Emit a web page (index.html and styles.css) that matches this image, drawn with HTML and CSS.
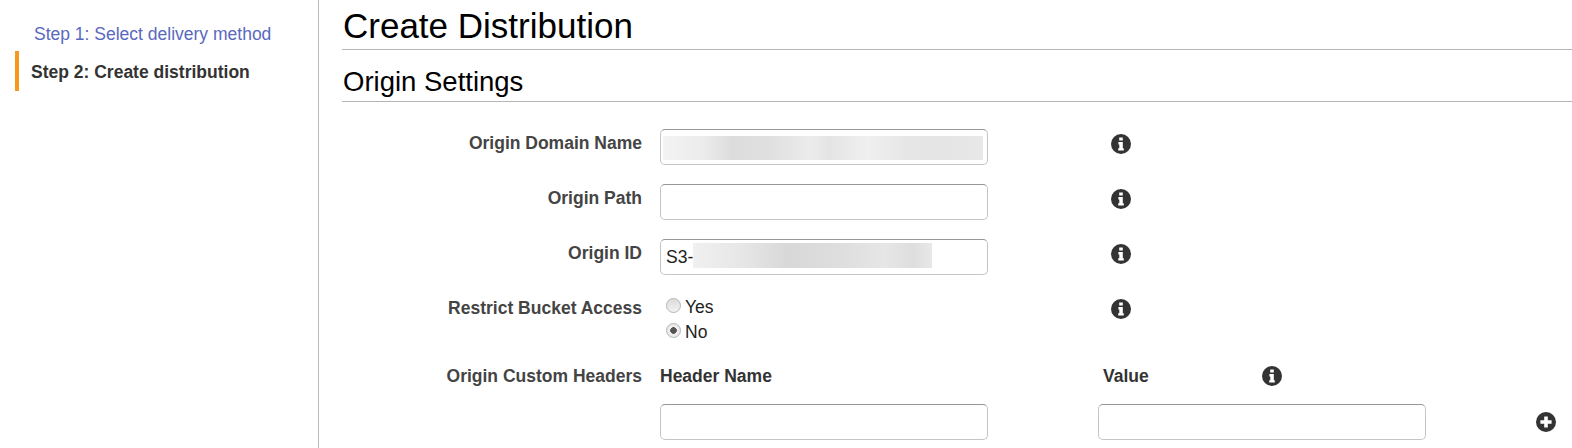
FILE: index.html
```html
<!DOCTYPE html>
<html lang="en">
<head>
  <meta charset="UTF-8">
  <meta name="viewport" content="width=device-width, initial-scale=1.0">
  <title>Create Distribution</title>
  <link rel="stylesheet" href="styles.css">
</head>
<body>
  <svg class="icon-defs" width="0" height="0">
    <symbol id="icon-info" viewBox="0 0 20 20">
      <path fill-rule="evenodd" d="M10 0a10 10 0 1 0 0 20a10 10 0 0 0 0-20zM8.2 3.4h3.6v3H8.2zM7.4 8h4.4v6.2h1v2.4H7.2v-2.4h1.1v-3.8h-.9z"/>
    </symbol>
    <symbol id="icon-plus" viewBox="0 0 20 20">
      <path fill-rule="evenodd" d="M10 0a10 10 0 1 0 0 20a10 10 0 0 0 0-20zM8.2 4.4h3.6v3.8h3.8v3.6h-3.8v3.8H8.2v-3.8H4.4V8.2h3.8z"/>
    </symbol>
  </svg>

  <div class="layout">
    <!-- Wizard steps -->
    <nav class="sidebar">
      <a class="step" href="#">Step 1: Select delivery method</a>
      <div class="step step-active">Step 2: Create distribution</div>
    </nav>

    <main class="content">
      <h1>Create Distribution</h1>
      <h2>Origin Settings</h2>

      <div class="form-row">
        <label class="form-label">Origin Domain Name</label>
        <div class="field">
          <input class="text-input" type="text">
          <span class="blur blur-domain"></span>
        </div>
        <svg class="icon icon-help"><use href="#icon-info"/></svg>
      </div>

      <div class="form-row">
        <label class="form-label">Origin Path</label>
        <div class="field">
          <input class="text-input" type="text">
        </div>
        <svg class="icon icon-help"><use href="#icon-info"/></svg>
      </div>

      <div class="form-row">
        <label class="form-label">Origin ID</label>
        <div class="field">
          <input class="text-input" type="text" value="S3-">
          <span class="blur blur-id"></span>
        </div>
        <svg class="icon icon-help"><use href="#icon-info"/></svg>
      </div>

      <div class="form-row form-row-radio">
        <label class="form-label">Restrict Bucket Access</label>
        <div class="field radio-group">
          <label class="radio"><input type="radio" name="restrict"> Yes</label>
          <label class="radio"><input type="radio" name="restrict" checked> No</label>
        </div>
        <svg class="icon icon-help"><use href="#icon-info"/></svg>
      </div>

      <!-- Custom headers table -->
      <div class="headers-row">
        <label class="form-label">Origin Custom Headers</label>
        <div class="col-name col-title">Header Name</div>
        <div class="col-value col-title">Value</div>
        <svg class="icon"><use href="#icon-info"/></svg>
      </div>
      <div class="headers-inputs">
        <input class="text-input col-name" type="text">
        <input class="text-input col-value" type="text">
        <svg class="icon icon-add"><use href="#icon-plus"/></svg>
      </div>
    </main>
  </div>
</body>
</html>
```

FILE: styles.css
```css
html, body {
  height: 100%;
}

body {
  margin: 0;
  font-family: "Liberation Sans", Arial, sans-serif;
  font-size: 17.5px;
  color: #333;
  background-color: white;
  overflow: hidden;
}

.icon-defs {
  display: block;
}

.layout {
  display: flex;
  height: 100%;
}

.sidebar {
  width: 318px;
  flex-shrink: 0;
  border-right: 1px solid #b9b9b9;
  padding-top: 14px;
}

.step {
  display: block;
  height: 40px;
  line-height: 40px;
  margin-left: 15px;
  padding-left: 19px;
  color: #5a68c0;
  text-decoration: none;
}

.step-active {
  margin-top: -3px;
  padding-left: 12px;
  border-left: 4px solid #f7981d;
  font-weight: bold;
  line-height: 43px;
  color: #333;
}

.content {
  flex: 1;
  padding-left: 23px;
}

h1 {
  margin: 0;
  height: 49px;
  line-height: 52px;
  font-size: 35px;
  font-weight: normal;
  color: black;
  padding-left: 1px;
  border-bottom: 1px solid #b5b5b5;
}

h2 {
  margin: 0;
  height: 51px;
  line-height: 64px;
  font-size: 27.5px;
  font-weight: normal;
  color: black;
  padding-left: 1px;
  border-bottom: 1px solid #b5b5b5;
}

.form-row {
  display: flex;
  align-items: flex-start;
  height: 55px;
}

.form-row:first-of-type {
  margin-top: 27px;
}

.form-row-radio {
  height: 66px;
}

.form-label {
  width: 300px;
  margin-right: 18px;
  flex-shrink: 0;
  text-align: right;
  font-weight: bold;
  color: #444;
  line-height: 29px;
}

.field {
  position: relative;
  width: 328px;
  flex-shrink: 0;
}

.text-input {
  display: block;
  width: 328px;
  height: 36px;
  box-sizing: border-box;
  padding: 0 5px;
  border: 1px solid #c4c4c4;
  border-top-color: #979797;
  border-radius: 5px;
  font-family: inherit;
  font-size: 17.5px;
  color: #222;
  background-color: white;
}

.blur {
  position: absolute;
  top: 7px;
  height: 24px;
}

.blur-domain {
  left: 3px;
  width: 320px;
  background: linear-gradient(90deg, #f3f3f3, #ececec 12%, #dcdcdc 22%, #e0e0e0 34%, #ececec 46%, #e4e4e4 52%, #f0f0f0 64%, #e6e6e6 76%, #e4e4e4 88%, #e8e8e8);
}

.blur-id {
  left: 33px;
  top: 4px;
  height: 25px;
  width: 239px;
  background: linear-gradient(90deg, #f0f0f0, #e8e8e8 18%, #d8d8d8 40%, #dedede 62%, #e6e6e6 80%, #dedede 92%, #e8e8e8);
}

.icon {
  width: 20px;
  height: 20px;
  flex-shrink: 0;
  fill: #333;
}

.icon-help {
  margin-left: 123px;
  margin-top: 5px;
}

.radio-group {
  padding-top: 1px;
}

.radio {
  display: flex;
  align-items: center;
  height: 25px;
  color: #222;
  padding-left: 6px;
  gap: 4px;
  font-size: 17.5px;
}

.radio input {
  appearance: none;
  width: 15px;
  height: 15px;
  margin: 0 0 4px;
  border: 1px solid #b5b5b5;
  border-radius: 50%;
  background: linear-gradient(#dcdcdc, #f2f2f2);
}

.radio input:checked {
  background: radial-gradient(circle, #555 0, #555 3px, #f0f0f0 3.6px, #e2e2e2 100%);
}

.headers-row {
  display: flex;
  align-items: center;
  height: 30px;
  box-sizing: border-box;
  padding-top: 2px;
}

.col-name {
  width: 328px;
  flex-shrink: 0;
}

.col-value {
  width: 328px;
  flex-shrink: 0;
  margin-left: 110px;
}

.col-title {
  font-weight: bold;
  color: #333;
}

.headers-row .col-value {
  width: 159px;
  margin-left: 115px;
}

.headers-inputs {
  display: flex;
  align-items: center;
  margin-top: 14px;
  margin-left: 318px;
}

.icon-add {
  margin-left: 110px;
}
```
